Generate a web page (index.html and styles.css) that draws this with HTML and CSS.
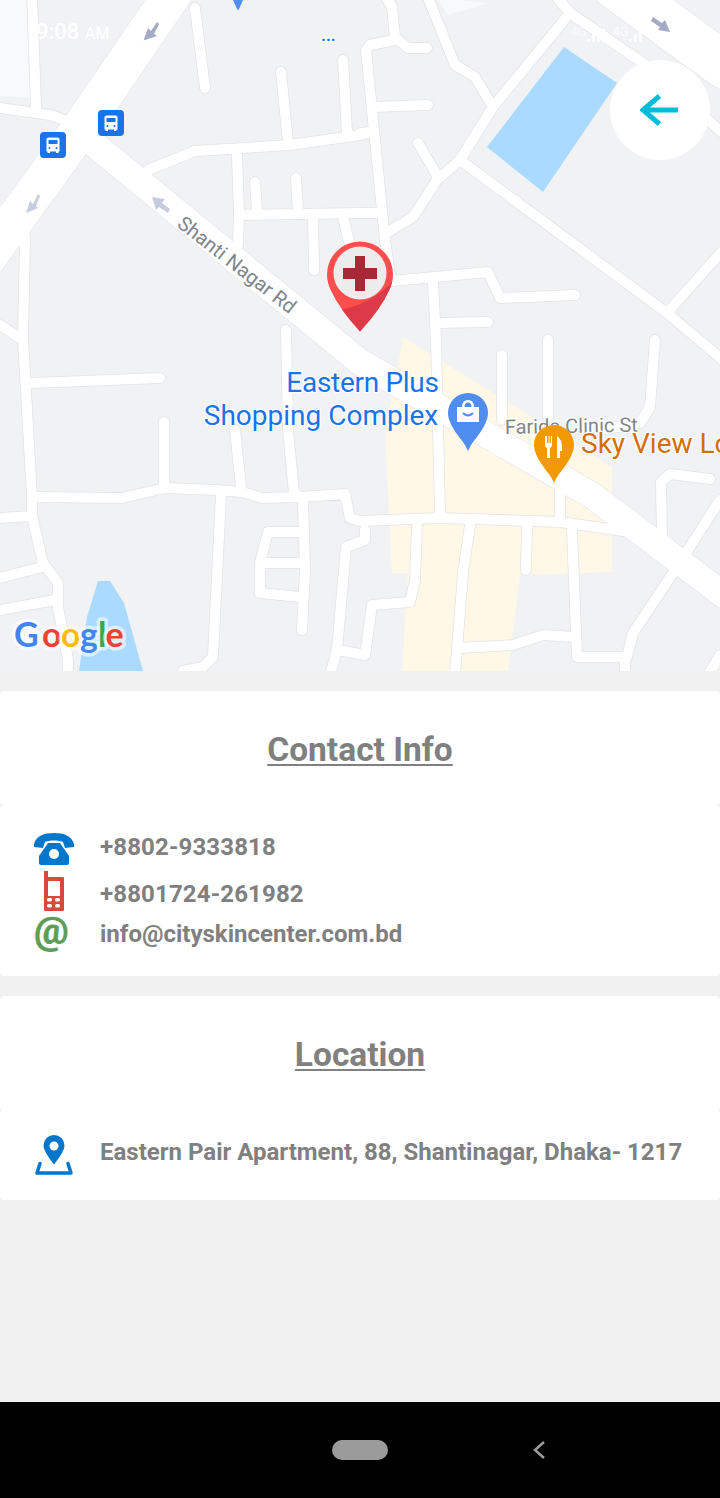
FILE: index.html
```html
<!DOCTYPE html>
<html lang="en">
<head>
<meta charset="utf-8">
<title>Contact Info</title>
<link rel="stylesheet" href="styles.css">
</head>
<body>
<div class="screen">
<main class="content">
  <section class="map">
    <svg class="map-art" viewBox="0 0 720 671" width="720" height="671">
      <defs>
        <g id="roads-thin">
          <polyline points="32,-5 36,107"/>
          <polyline points="0,108 50,115 80,125"/>
          <polyline points="195,8 205,88"/>
          <polyline points="281,72 288,142"/>
          <polyline points="343,60 347,132"/>
          <polyline points="148,170 195,151 290,145 360,135 370,132"/>
          <polyline points="237,155 239,213 238,245"/>
          <polyline points="239,215 360,213 378,213"/>
          <polyline points="255,182 257,210"/>
          <polyline points="296,178 298,210"/>
          <polyline points="313,215 314,270"/>
          <polyline points="343,217 351,250"/>
          <polyline points="25,237 23,340 32,497 32,516 43,563 58,583 58,607 68,660 68,675"/>
          <polyline points="0,325 23,340"/>
          <polyline points="32,383 160,378"/>
          <polyline points="164,422 164,488"/>
          <polyline points="33,497 122,498 165,488 217,490 242,492 262,498 298,497 345,494 350,518 360,521 440,518 560,522 630,532 650,540"/>
          <polyline points="286,330 288,430 294,493 303,500 305,570 302,630"/>
          <polyline points="235,430 241,487"/>
          <polyline points="0,518 32,516"/>
          <polyline points="0,578 42,567"/>
          <polyline points="0,610 55,600"/>
          <polyline points="221,495 213,657 203,667 183,671"/>
          <polyline points="302,532 268,532 260,563 260,593 300,597"/>
          <polyline points="260,563 302,563"/>
          <polyline points="365,530 365,540 346,547 337,650 330,675"/>
          <polyline points="338,650 365,655 372,605 410,602 415,580 417,525"/>
          <polyline points="470,525 463,573 455,675"/>
          <polyline points="527,527 526,570"/>
          <polyline points="560,487 560,520"/>
          <polyline points="572,530 577,657 627,657 633,633 677,567 720,500"/>
          <polyline points="460,648 513,645 543,635 573,637"/>
          <polyline points="625,657 625,675"/>
          <polyline points="708,675 720,655"/>
          <polyline points="662,537 661,482 670,474 710,479"/>
          <polyline points="502,355 502,420"/>
          <polyline points="548,340 548,417"/>
          <polyline points="655,340 650,407 640,423 600,430"/>
          <polyline points="555,-5 570,13 643,63 725,135"/>
          <polyline points="570,13 493,107 460,160 437,180 413,217 388,232"/>
          <polyline points="460,160 667,313 725,362"/>
          <polyline points="667,313 725,248"/>
          <polyline points="427,-5 455,65 475,77 493,107"/>
          <polyline points="418,143 438,177"/>
          <polyline points="385,-5 392,7 395,37 408,48 427,48"/>
          <polyline points="395,40 370,45 366,50 385,240 391,281"/>
          <polyline points="373,107 428,105"/>
          <polyline points="360,133 370,132"/>
          <polyline points="392,281 488,272 500,298 575,295"/>
          <polyline points="433,283 436,340 440,513"/>
          <polyline points="438,323 488,322"/>
        </g>
        <g id="roads-wide">
          <polyline points="178,-14 100,100 62,155 -16,262"/>
        </g>
        <g id="roads-top">
          <polyline points="615,-14 725,66"/>
        </g>
        <g id="roads-mid">
          <polyline points="95,145 360,362 593,496 725,596"/>
        </g>
        <clipPath id="pin-clip">
          <path d="M360 241.500a33 33 0 0 1 33 33q0 8-4 16q-8 18-29 41q-21-23-29-41q-4-8-4-16a33 33 0 0 1 33-33z"/>
        </clipPath>
        <symbol id="bus" viewBox="0 0 26 26">
          <rect class="bus-bg" width="26" height="26" rx="4"/>
          <path class="bus-fg" d="M6.500 7q0-1.500 2-1.500h9q2 0 2 1.500v12.500h-1v1.500h-2.500v-1.500h-6v1.500h-2.500v-1.500h-1z"/>
          <rect class="bus-bg" x="8.500" y="8" width="9" height="4"/>
          <circle class="bus-bg" cx="9.500" cy="16" r="1"/>
          <circle class="bus-bg" cx="16.500" cy="16" r="1"/>
        </symbol>
      </defs>

      <rect class="land" width="720" height="671"/>
      <polygon class="pale" points="0,0 27,0 30,98 0,96"/>
      <polygon class="pale" points="437,-2 488,3 448,15"/>
      <polygon class="sand" points="403,337 612,467 612,572 520,575 508,671 402,671 408,573 392,573 385,433"/>
      <polygon class="water" points="564,47 617,83 543,192 487,147"/>
      <polygon class="water" points="98,581 110,581 124,603 143,671 79,671 87,617"/>

      <use href="#roads-thin" class="casing thin"/>
      <use href="#roads-mid" class="casing mid"/>
      <use href="#roads-wide" class="casing wide"/>
      <use href="#roads-top" class="casing top"/>
      <use href="#roads-thin" class="road thin"/>
      <use href="#roads-mid" class="road mid"/>
      <use href="#roads-wide" class="road wide"/>
      <use href="#roads-top" class="road top"/>

      <polygon class="arrow-dark" points="143.500,40.500 148,28 151,31 157,22 159,24 154,34 157,36"/>
      <polygon class="arrow-light" points="26,213 30,201 33,204 38,194 40,196 36,206 38,208"/>
      <polygon class="arrow-light" points="152,197 165,199 162,203 170,209 168,213 159,207 156,210"/>
      <polygon class="arrow-dark" points="670,32 658,30 660,27 651,21 653,17 662,23 665,20"/>

      <use href="#bus" x="98" y="110" width="26" height="26"/>
      <use href="#bus" x="40" y="132" width="26" height="26"/>

      <path class="poi-blue" d="M233 0h10l-4 9q-1 2-2 0z"/>
      <text class="dots" x="321" y="41">...</text>

      <text class="street" transform="translate(176 226) rotate(38)">Shanti Nagar Rd</text>
      <text class="street street-sm" transform="translate(505 434) rotate(-1)">Farida Clinic St</text>
      <text class="label label-blue label-tight" x="362.500" y="392">Eastern Plus</text>
      <text class="label label-blue" x="321" y="425">Shopping Complex</text>
      <text class="label label-orange" x="581" y="453">Sky View Lo</text>

      <path class="poi-blue" d="M468 393a20 20 0 0 1 20 20q0 11-15 29q-3 4-5 9q-2-5-5-9q-15-18-15-29a20 20 0 0 1 20-20z"/>
      <path class="poi-mark" d="M457 407h5q0-7 6-7t6 7h5v15h-22zM464.500 407h7q0-4.500-3.500-4.500t-3.500 4.500z"/>
      <path class="poi-line" d="M463 413q5 5 10 0"/>

      <path class="poi-orange" d="M554 425a20 20 0 0 1 20 20q0 11-15 29q-3 4-5 9q-2-5-5-9q-15-18-15-29a20 20 0 0 1 20-20z"/>
      <path class="poi-mark" d="M547 436v7h1.500v-7h1v7h1.500v-7h1v9q0 2-2 3v10h-3v-10q-2-1-2-3v-9zM557 436q5 3 5 12v3h-2v7h-3z"/>

      <g clip-path="url(#pin-clip)">
        <rect class="pin-base" x="320" y="235" width="80" height="100"/>
        <path class="pin-shade" d="M335 311Q375 304 395 278V335H335z"/>
      </g>
      <circle class="pin-face" cx="360" cy="273" r="26.500"/>
      <path class="pin-cross" d="M355 256h10v12h12v11h-12v12h-10v-12h-12v-11h12z"/>

      <text class="google" x="14 42 61 80 98 105.500" y="647"><tspan class="g-blue">G</tspan><tspan class="g-red">o</tspan><tspan class="g-yellow">o</tspan><tspan class="g-blue">g</tspan><tspan class="g-green">l</tspan><tspan class="g-red">e</tspan></text>

      <text class="status-time" x="36" y="39">9:08 <tspan class="status-ampm">AM</tspan></text>
      <text class="status-net" x="571" y="36">4G</text>
      <text class="status-net" x="613" y="36">4G</text>
      <path class="status-bars" d="M587 39h3v3h-3zM592 35h3v7h-3zM597 31h3v11h-3zM602 29h3v13h-3zM629 39h3v3h-3zM634 35h3v7h-3zM639 31h3v11h-3z"/>
    </svg>
    <button class="back" type="button" aria-label="Back">
      <svg viewBox="0 0 40 32" width="40" height="32"><path class="back-arrow" d="M19.500 2 L3 16 L19.500 30 M3 16 H38"/></svg>
    </button>
  </section>

  <section class="card">
    <header class="card-head"><h2>Contact Info</h2></header>
    <div class="card-body card-body-contact">
      <div class="row row-top">
        <span class="icon">
          <svg viewBox="0 0 40 33" width="40" height="33"><path class="i-blue" d="M0 11C2 3 10 0 20 0s18 3 20 11v3l-9 1-2-6c-4-2-14-2-18 0l-2 6-9-1z"/><path class="i-blue" d="M14 10h12l9 13v7q0 2-2 2H7q-2 0-2-2v-7z"/><circle class="i-hole" cx="20" cy="21" r="5"/></svg>
        </span>
        <span class="text text-phone">+8802-9333818</span>
      </div>
      <div class="row row-mobile">
        <span class="icon">
          <svg viewBox="0 0 20 40" width="20" height="40"><path class="i-red" d="M0 0h4v6h15q1 0 1 1v32q0 1-1 1H1q-1 0-1-1z"/><rect class="i-hole" x="4" y="10" width="12" height="15"/><g class="i-hole"><rect x="3" y="27" width="5" height="3.500" rx="1.500"/><rect x="11" y="27" width="5" height="3.500" rx="1.500"/><rect x="3" y="33" width="5" height="3.500" rx="1.500"/><rect x="11" y="33" width="5" height="3.500" rx="1.500"/></g></svg>
        </span>
        <span class="text text-phone">+8801724-261982</span>
      </div>
      <div class="row row-mail">
        <span class="icon icon-at">@</span>
        <span class="text">info@cityskincenter.com.bd</span>
      </div>
    </div>
  </section>

  <section class="card">
    <header class="card-head"><h2>Location</h2></header>
    <div class="card-body card-body-location">
      <div class="row row-top">
        <span class="icon">
          <svg viewBox="0 0 40 40" width="40" height="40"><path class="i-blue" d="M20 0a10.500 10.500 0 0 1 10.500 10.500q0 6-10.500 19q-10.500-13-10.500-19A10.500 10.500 0 0 1 20 0z"/><circle class="i-hole" cx="20" cy="11" r="4.500"/><path class="i-tray" d="M6 28.500 3 38h34l-3-9.500"/></svg>
        </span>
        <span class="text">Eastern Pair Apartment, 88, Shantinagar, Dhaka- 1217</span>
      </div>
    </div>
  </section>
</main>
<nav class="navbar">
  <span class="nav-pill"></span>
  <svg class="nav-back" viewBox="0 0 14 20" width="14" height="20"><path d="M12 2 3 10l9 8"/></svg>
</nav>
</div>
</body>
</html>
```
FILE: styles.css
```css
* { box-sizing: border-box; }
html, body { margin: 0; padding: 0; }
body { font-family: Roboto, "Liberation Sans", sans-serif; background: #f1f1f1; }
.screen { width: 720px; height: 1498px; display: flex; flex-direction: column; overflow: hidden; }
.content { flex: 1; display: flex; flex-direction: column; gap: 20px; background: #f1f1f1; }

.map { position: relative; height: 671px; }
.map-art { display: block; }
.land { fill: #f1f2f4; }
.pale { fill: #f8f9fb; }
.sand { fill: #fff8e7; }
.water { fill: #aadaff; }
.casing, .road { fill: none; stroke-linecap: round; stroke-linejoin: round; }
.casing { stroke: #e2e3e6; }
.road { stroke: #fff; }
.casing.thin { stroke-width: 11.500px; }
.road.thin { stroke-width: 10px; }
.casing.mid { stroke-width: 27px; }
.road.mid { stroke-width: 26px; }
.casing.wide { stroke-width: 39px; }
.road.wide { stroke-width: 38px; }
.casing.top { stroke-width: 47px; }
.road.top { stroke-width: 46px; }
.arrow-dark { fill: #a4abc4; }
.arrow-light { fill: #c8ccdf; }
.bus-bg { fill: #1a73e8; }
.bus-fg { fill: #fff; }
.poi-blue { fill: #4f8df0; }
.poi-orange { fill: #f29900; }
.poi-mark { fill: #fff; fill-rule: evenodd; }
.poi-line { fill: none; stroke: #4f8df0; stroke-width: 2; }
.dots { fill: #1a73e8; font-size: 17px; font-weight: 700; paint-order: stroke; stroke: #fff; stroke-width: 3px; }
.street { fill: #80868b; font-size: 20px; paint-order: stroke; stroke: #fff; stroke-width: 2.500px; stroke-linejoin: round; }
.label { font-size: 28px; paint-order: stroke; stroke: #fff; stroke-width: 2.500px; stroke-linejoin: round; }
.label-blue { fill: #1a73e8; text-anchor: middle; }
.label-tight { letter-spacing: -.3px; }
.label-orange { fill: #d56e00; }
.pin-base { fill: #fd4d4d; }
.pin-shade { fill: #dc3a48; }
.pin-face { fill: #ececec; }
.pin-cross { fill: #a92836; }
.google { font-family: Lato, Roboto, sans-serif; font-size: 34px; font-weight: 700; paint-order: stroke; stroke: #fff; stroke-opacity: .6; stroke-width: 7px; stroke-linejoin: round; }
.g-blue { fill: #4285f4; }
.g-red { fill: #ea4335; }
.g-yellow { fill: #fbbc05; }
.g-green { fill: #34a853; }
.status-time { fill: #fff; font-size: 22px; font-weight: 500; }
.status-ampm { font-size: 16px; }
.status-net { fill: #fff; fill-opacity: .8; font-size: 12px; }
.status-bars { fill: #fff; fill-opacity: .85; }

.back { position: absolute; top: 60px; right: 10px; width: 100px; height: 100px; padding: 0; border: 0; border-radius: 50%; background: #fff; display: flex; align-items: center; justify-content: center; }
.back-arrow { fill: none; stroke: #00bcd9; stroke-width: 5px; }

.card { display: flex; flex-direction: column; }
.card-head { height: 114px; background: #fff; border-radius: 4px; display: flex; justify-content: center; padding-top: 39px; }
.card-head h2 { margin: 0; font-size: 33.500px; line-height: 40px; font-weight: 700; color: #808080; text-decoration: underline; text-decoration-thickness: 2px; text-underline-offset: 3px; }
.card-body { background: #fff; border-radius: 4px; display: flex; flex-direction: column; padding-left: 34px; }
.card-body-contact { height: 171px; padding-top: 28px; gap: 5px; }
.card-body-location { height: 90px; padding-top: 25px; }
.row { display: flex; align-items: center; }
.row-top { align-items: flex-start; }
.row-mobile .text { position: relative; top: 3px; }
.row-mail { margin-top: -2px; }
.row-mail .text { position: relative; top: 2px; }
.card-body-location .text { position: relative; top: 3px; }
.icon { width: 66px; flex: none; display: flex; }
.icon svg { display: block; }
.row-mobile .icon { padding-left: 10px; }
.icon-at { font-size: 39px; line-height: 35px; height: 35px; font-weight: 900; color: #5f9e58; }
.text { font-size: 24px; line-height: 28px; font-weight: 700; color: #808080; white-space: nowrap; }
.text-phone { letter-spacing: .15px; }
.i-blue { fill: #0277cc; }
.i-red { fill: #d84a3c; }
.i-hole { fill: #fff; }
.i-tray { fill: none; stroke: #0277cc; stroke-width: 3.500px; stroke-linejoin: round; stroke-linecap: round; }

.navbar { height: 96px; background: #000; display: flex; align-items: center; position: relative; padding-left: 332px; gap: 144px; }
.nav-pill { width: 56px; height: 20px; border-radius: 10px; background: #9b9b9b; }
.nav-back { fill: none; stroke: #9b9b9b; stroke-width: 2.500px; }
```
